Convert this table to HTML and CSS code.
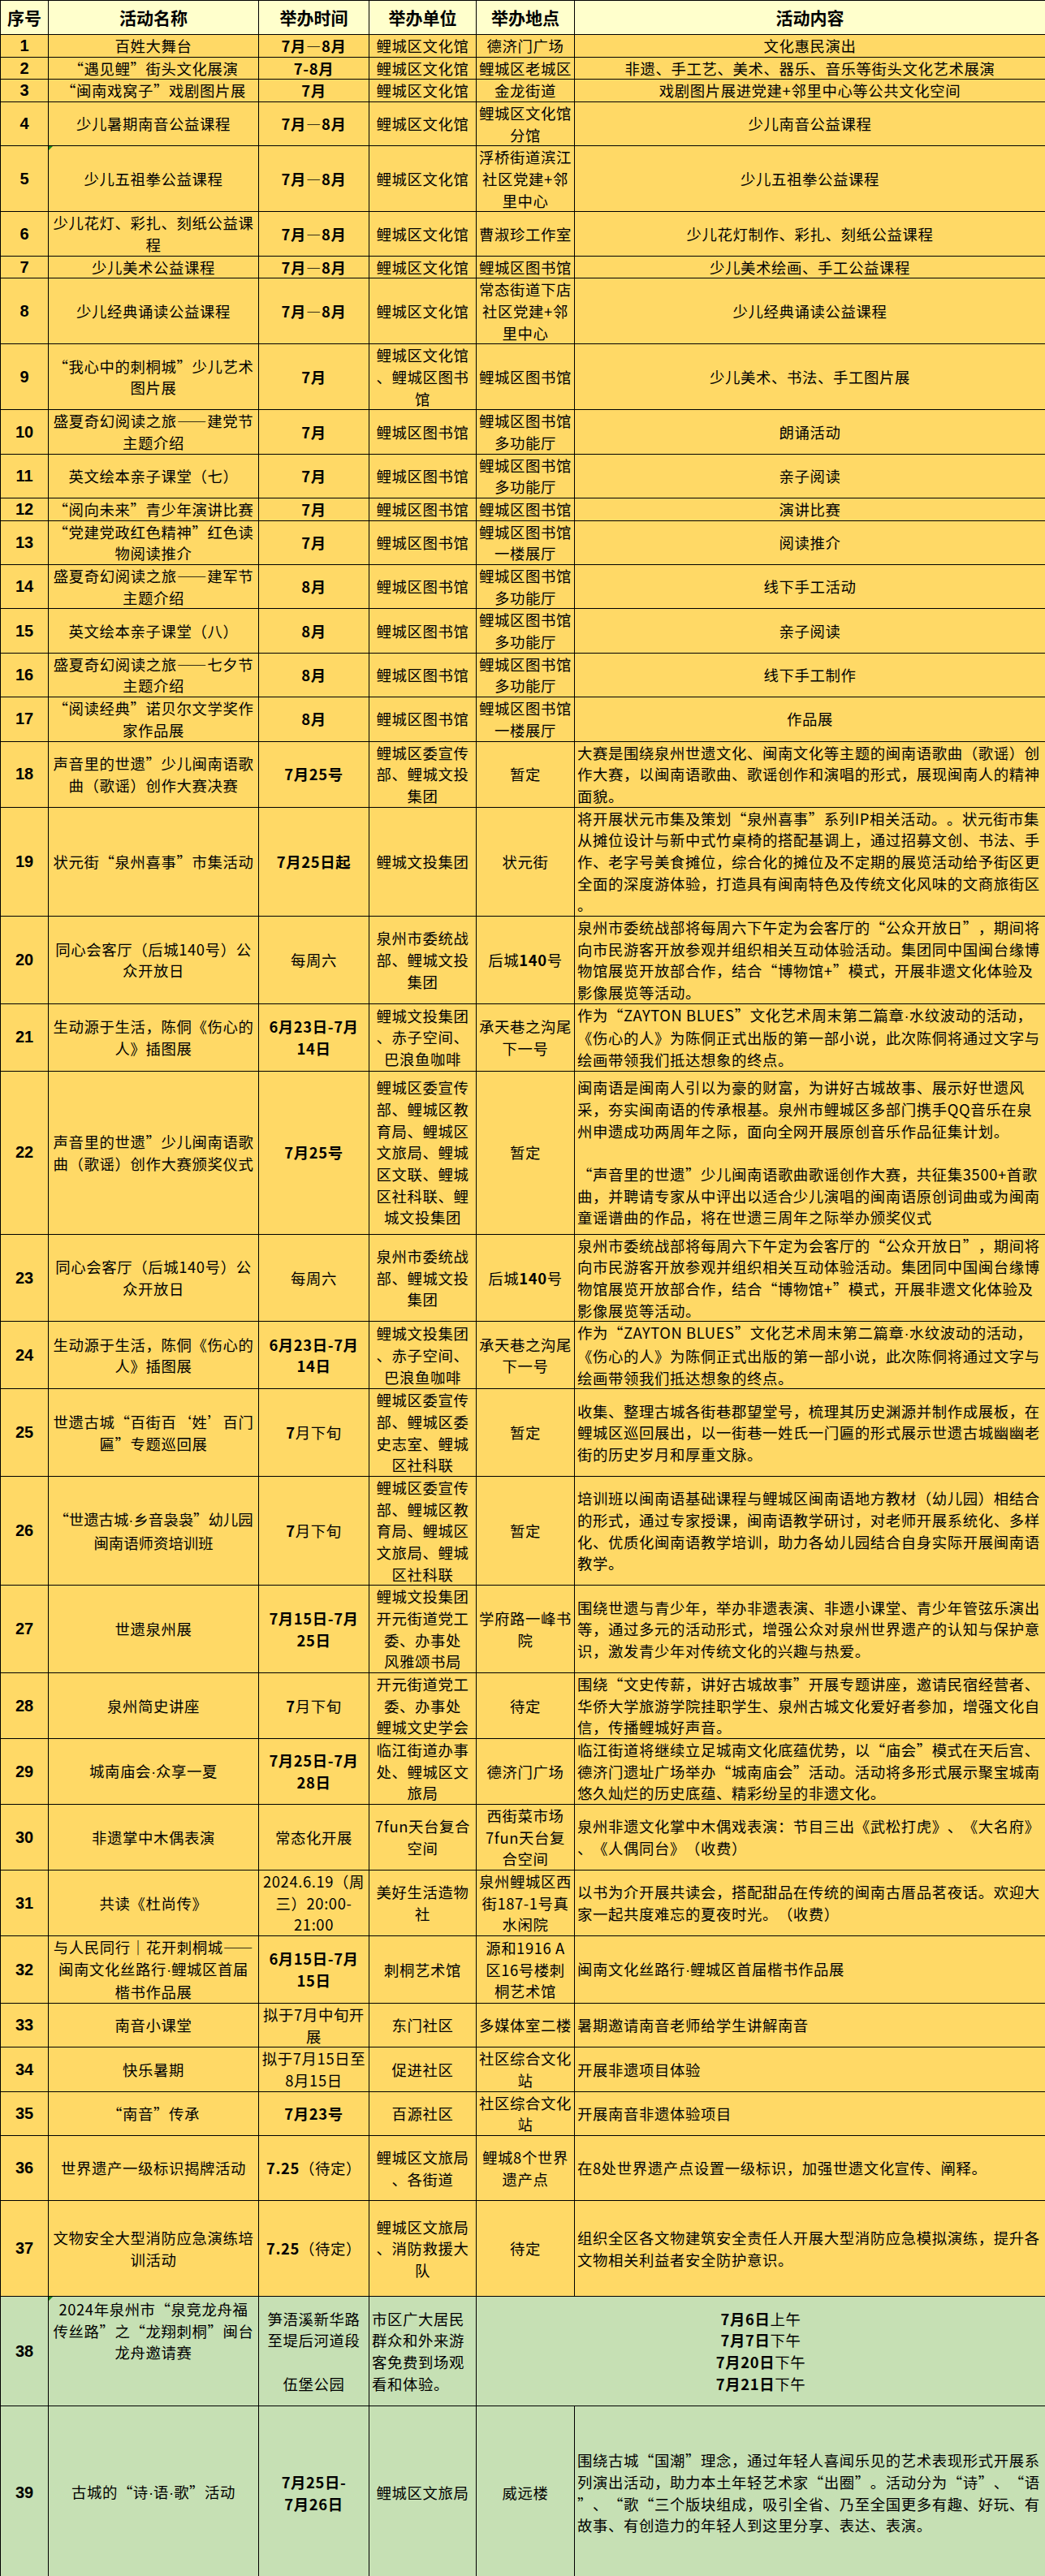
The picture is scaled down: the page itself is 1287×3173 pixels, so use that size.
FILE: index.html
```html
<!DOCTYPE html>
<html lang="zh-CN">
<head>
<meta charset="utf-8">
<title>鲤城区暑期文化活动一览表</title>
<link rel="stylesheet" href="styles.css">
</head>
<body>
<table class="sched">
<colgroup><col class="c-no"><col class="c-name"><col class="c-time"><col class="c-org"><col class="c-place"><col class="c-desc"></colgroup>
<thead>
<tr><th>序号</th><th>活动名称</th><th>举办时间</th><th>举办单位</th><th>举办地点</th><th>活动内容</th></tr>
</thead>
<tbody>
<tr><td class="no">1</td><td class="name">百姓大舞台</td><td class="time"><b>7月—8月</b></td><td>鲤城区文化馆</td><td>德济门广场</td><td>文化惠民演出</td></tr>
<tr><td class="no">2</td><td class="name">“遇见鲤”街头文化展演</td><td class="time"><b>7-8月</b></td><td>鲤城区文化馆</td><td>鲤城区老城区</td><td>非遗、手工艺、美术、器乐、音乐等街头文化艺术展演</td></tr>
<tr><td class="no">3</td><td class="name">“闽南戏窝子”戏剧图片展</td><td class="time"><b>7月</b></td><td>鲤城区文化馆</td><td>金龙街道</td><td>戏剧图片展进党建+邻里中心等公共文化空间</td></tr>
<tr><td class="no">4</td><td class="name">少儿暑期南音公益课程</td><td class="time"><b>7月—8月</b></td><td>鲤城区文化馆</td><td>鲤城区文化馆分馆</td><td>少儿南音公益课程</td></tr>
<tr><td class="no">5</td><td class="name note">少儿五祖拳公益课程</td><td class="time"><b>7月—8月</b></td><td>鲤城区文化馆</td><td>浮桥街道滨江社区党建+邻里中心</td><td>少儿五祖拳公益课程</td></tr>
<tr><td class="no">6</td><td class="name">少儿花灯、彩扎、刻纸公益课程</td><td class="time"><b>7月—8月</b></td><td>鲤城区文化馆</td><td>曹淑珍工作室</td><td>少儿花灯制作、彩扎、刻纸公益课程</td></tr>
<tr><td class="no">7</td><td class="name">少儿美术公益课程</td><td class="time"><b>7月—8月</b></td><td>鲤城区文化馆</td><td>鲤城区图书馆</td><td>少儿美术绘画、手工公益课程</td></tr>
<tr><td class="no">8</td><td class="name">少儿经典诵读公益课程</td><td class="time"><b>7月—8月</b></td><td>鲤城区文化馆</td><td>常态街道下店社区党建+邻里中心</td><td>少儿经典诵读公益课程</td></tr>
<tr><td class="no">9</td><td class="name">“我心中的刺桐城”少儿艺术图片展</td><td class="time"><b>7月</b></td><td>鲤城区文化馆、鲤城区图书馆</td><td>鲤城区图书馆</td><td>少儿美术、书法、手工图片展</td></tr>
<tr><td class="no">10</td><td class="name">盛夏奇幻阅读之旅——建党节主题介绍</td><td class="time"><b>7月</b></td><td>鲤城区图书馆</td><td>鲤城区图书馆多功能厅</td><td>朗诵活动</td></tr>
<tr><td class="no">11</td><td class="name">英文绘本亲子课堂（七）</td><td class="time"><b>7月</b></td><td>鲤城区图书馆</td><td>鲤城区图书馆多功能厅</td><td>亲子阅读</td></tr>
<tr><td class="no">12</td><td class="name">“阅向未来”青少年演讲比赛</td><td class="time"><b>7月</b></td><td>鲤城区图书馆</td><td>鲤城区图书馆</td><td>演讲比赛</td></tr>
<tr><td class="no">13</td><td class="name">“党建党政红色精神”红色读物阅读推介</td><td class="time"><b>7月</b></td><td>鲤城区图书馆</td><td>鲤城区图书馆一楼展厅</td><td>阅读推介</td></tr>
<tr><td class="no">14</td><td class="name">盛夏奇幻阅读之旅——建军节主题介绍</td><td class="time"><b>8月</b></td><td>鲤城区图书馆</td><td>鲤城区图书馆多功能厅</td><td>线下手工活动</td></tr>
<tr><td class="no">15</td><td class="name">英文绘本亲子课堂（八）</td><td class="time"><b>8月</b></td><td>鲤城区图书馆</td><td>鲤城区图书馆多功能厅</td><td>亲子阅读</td></tr>
<tr><td class="no">16</td><td class="name">盛夏奇幻阅读之旅——七夕节主题介绍</td><td class="time"><b>8月</b></td><td>鲤城区图书馆</td><td>鲤城区图书馆多功能厅</td><td>线下手工制作</td></tr>
<tr><td class="no">17</td><td class="name">“阅读经典”诺贝尔文学奖作家作品展</td><td class="time"><b>8月</b></td><td>鲤城区图书馆</td><td>鲤城区图书馆一楼展厅</td><td>作品展</td></tr>
<tr><td class="no">18</td><td class="name">声音里的世遗”少儿闽南语歌曲（歌谣）创作大赛决赛</td><td class="time"><b>7月25号</b></td><td>鲤城区委宣传部、鲤城文投集团</td><td>暂定</td><td class="l">大赛是围绕泉州世遗文化、闽南文化等主题的闽南语歌曲（歌谣）创作大赛，以闽南语歌曲、歌谣创作和演唱的形式，展现闽南人的精神面貌。</td></tr>
<tr><td class="no">19</td><td class="name">状元街“泉州喜事”市集活动</td><td class="time"><b>7月25日起</b></td><td>鲤城文投集团</td><td>状元街</td><td class="l">将开展状元市集及策划“泉州喜事”系列IP相关活动。。状元街市集从摊位设计与新中式竹桌椅的搭配基调上，通过招募文创、书法、手作、老字号美食摊位，综合化的摊位及不定期的展览活动给予街区更全面的深度游体验，打造具有闽南特色及传统文化风味的文商旅街区。</td></tr>
<tr><td class="no">20</td><td class="name">同心会客厅（后城140号）公众开放日</td><td class="time">每周六</td><td>泉州市委统战部、鲤城文投集团</td><td>后城<b>140</b>号</td><td class="l">泉州市委统战部将每周六下午定为会客厅的“公众开放日”，期间将向市民游客开放参观并组织相关互动体验活动。集团同中国闽台缘博物馆展览开放部合作，结合“博物馆+”模式，开展非遗文化体验及影像展览等活动。</td></tr>
<tr><td class="no">21</td><td class="name">生动源于生活，陈侗《伤心的人》插图展</td><td class="time"><b>6月23日-7月14日</b></td><td>鲤城文投集团、赤子空间、巴浪鱼咖啡</td><td>承天巷之沟尾下一号</td><td class="l">作为“ZAYTON BLUES”文化艺术周末第二篇章<span class="mid">·</span>水纹波动的活动，<br>《伤心的人》为陈侗正式出版的第一部小说，此次陈侗将通过文字与<br>绘画带领我们抵达想象的终点。</td></tr>
<tr class="h201"><td class="no">22</td><td class="name">声音里的世遗”少儿闽南语歌曲（歌谣）创作大赛颁奖仪式</td><td class="time"><b>7月25号</b></td><td>鲤城区委宣传部、鲤城区教育局、鲤城区文旅局、鲤城区文联、鲤城区社科联、鲤城文投集团</td><td>暂定</td><td class="l">闽南语是闽南人引以为豪的财富，为讲好古城故事、展示好世遗风<br>采，夯实闽南语的传承根基。泉州市鲤城区多部门携手QQ音乐在泉州申遗成功两周年之际，面向全网开展原创音乐作品征集计划。<br><br>“声音里的世遗”少儿闽南语歌曲歌谣创作大赛，共征集3500+首歌曲，并聘请专家从中评出以适合少儿演唱的闽南语原创词曲或为闽南童谣谱曲的作品，将在世遗三周年之际举办颁奖仪式</td></tr>
<tr><td class="no">23</td><td class="name">同心会客厅（后城140号）公众开放日</td><td class="time">每周六</td><td>泉州市委统战部、鲤城文投集团</td><td>后城<b>140</b>号</td><td class="l">泉州市委统战部将每周六下午定为会客厅的“公众开放日”，期间将向市民游客开放参观并组织相关互动体验活动。集团同中国闽台缘博物馆展览开放部合作，结合“博物馆+”模式，开展非遗文化体验及影像展览等活动。</td></tr>
<tr><td class="no">24</td><td class="name">生动源于生活，陈侗《伤心的人》插图展</td><td class="time"><b>6月23日-7月14日</b></td><td>鲤城文投集团、赤子空间、巴浪鱼咖啡</td><td>承天巷之沟尾下一号</td><td class="l">作为“ZAYTON BLUES”文化艺术周末第二篇章<span class="mid">·</span>水纹波动的活动，<br>《伤心的人》为陈侗正式出版的第一部小说，此次陈侗将通过文字与<br>绘画带领我们抵达想象的终点。</td></tr>
<tr><td class="no">25</td><td class="name">世遗古城“百街百‘姓’百门匾”专题巡回展</td><td class="time"><b>7</b>月下旬</td><td>鲤城区委宣传部、鲤城区委史志室、鲤城区社科联</td><td>暂定</td><td class="l">收集、整理古城各街巷郡望堂号，梳理其历史渊源并制作成展板，在鲤城区巡回展出，以一街巷一姓氏一门匾的形式展示世遗古城幽幽老街的历史岁月和厚重文脉。</td></tr>
<tr><td class="no">26</td><td class="name tight">“世遗古城<span class="mid">·</span>乡音袅袅”幼儿园<br>闽南语师资培训班</td><td class="time"><b>7</b>月下旬</td><td>鲤城区委宣传部、鲤城区教育局、鲤城区文旅局、鲤城区社科联</td><td>暂定</td><td class="l">培训班以闽南语基础课程与鲤城区闽南语地方教材（幼儿园）相结合的形式，通过专家授课，闽南语教学研讨，对老师开展系统化、多样化、优质化闽南语教学培训，助力各幼儿园结合自身实际开展闽南语教学。</td></tr>
<tr><td class="no">27</td><td class="name">世遗泉州展</td><td class="time"><b>7月15日-7月25日</b></td><td>鲤城文投集团<br>开元街道党工委、办事处<br>风雅颂书局</td><td>学府路一峰书院</td><td class="l">围绕世遗与青少年，举办非遗表演、非遗小课堂、青少年管弦乐演出等，通过多元的活动形式，增强公众对泉州世界遗产的认知与保护意识，激发青少年对传统文化的兴趣与热爱。</td></tr>
<tr><td class="no">28</td><td class="name">泉州简史讲座</td><td class="time"><b>7</b>月下旬</td><td>开元街道党工委、办事处<br>鲤城文史学会</td><td>待定</td><td class="l">围绕“文史传薪，讲好古城故事”开展专题讲座，邀请民宿经营者、华侨大学旅游学院挂职学生、泉州古城文化爱好者参加，增强文化自信，传播鲤城好声音。</td></tr>
<tr><td class="no">29</td><td class="name">城南庙会<span class="mid">·</span>众享一夏</td><td class="time"><b>7月25日-7月28日</b></td><td>临江街道办事处、鲤城区文旅局</td><td>德济门广场</td><td class="l">临江街道将继续立足城南文化底蕴优势，以“庙会”模式在天后宫、德济门遗址广场举办“城南庙会”活动。活动将多形式展示聚宝城南悠久灿烂的历史底蕴、精彩纷呈的非遗文化。</td></tr>
<tr><td class="no">30</td><td class="name">非遗掌中木偶表演</td><td class="time">常态化开展</td><td class="nb">7fun天台复合空间</td><td class="nb">西街菜市场7fun天台复合空间</td><td class="l">泉州非遗文化掌中木偶戏表演：节目三出《武松打虎》、《大名府》、《人偶同台》（收费）</td></tr>
<tr><td class="no">31</td><td class="name">共读《杜尚传》</td><td class="time">2024.6.19（周三）20:00-&#8203;21:00</td><td>美好生活造物社</td><td class="nb">泉州鲤城区西街187-1号真水闲院</td><td class="l">以书为介开展共读会，搭配甜品在传统的闽南古厝品茗夜话。欢迎大家一起共度难忘的夏夜时光。（收费）</td></tr>
<tr><td class="no">32</td><td class="name">与人民同行｜花开刺桐城——<br>闽南文化丝路行<span class="mid">·</span>鲤城区首届<br>楷书作品展</td><td class="time"><b>6月15日-7月15日</b></td><td>刺桐艺术馆</td><td class="nb">源和1916 A区16号楼刺桐艺术馆</td><td class="l">闽南文化丝路行<span class="mid">·</span>鲤城区首届楷书作品展</td></tr>
<tr><td class="no">33</td><td class="name">南音小课堂</td><td class="time">拟于7月中旬开展</td><td>东门社区</td><td>多媒体室二楼</td><td class="l">暑期邀请南音老师给学生讲解南音</td></tr>
<tr><td class="no">34</td><td class="name">快乐暑期</td><td class="time">拟于7月15日至8月15日</td><td>促进社区</td><td>社区综合文化站</td><td class="l">开展非遗项目体验</td></tr>
<tr><td class="no">35</td><td class="name">“南音”传承</td><td class="time"><b>7月23号</b></td><td>百源社区</td><td>社区综合文化站</td><td class="l">开展南音非遗体验项目</td></tr>
<tr class="h80"><td class="no">36</td><td class="name">世界遗产一级标识揭牌活动</td><td class="time"><b>7.25</b>（待定）</td><td>鲤城区文旅局、各街道</td><td>鲤城8个世界遗产点</td><td class="l">在8处世界遗产点设置一级标识，加强世遗文化宣传、阐释。</td></tr>
<tr class="h118"><td class="no">37</td><td class="name">文物安全大型消防应急演练培训活动</td><td class="time"><b>7.25</b>（待定）</td><td>鲤城区文旅局、消防救援大队</td><td>待定</td><td class="l">组织全区各文物建筑安全责任人开展大型消防应急模拟演练，提升各文物相关利益者安全防护意识。</td></tr>
<tr class="green h135"><td class="no">38</td><td class="name note top">2024年泉州市“泉竞龙舟福<br>传丝路”之“龙翔刺桐”闽台<br>龙舟邀请赛</td><td>笋浯溪新华路至堤后河道段<br><br>伍堡公园</td><td class="l">市区广大居民群众和外来游客免费到场观看和体验。</td><td colspan="2"><b>7月6日</b>上午<br><b>7月7日</b>下午<br><b>7月20日</b>下午<br><b>7月21日</b>下午</td></tr>
<tr class="green h214"><td class="no">39</td><td class="name">古城的“诗<span class="mid">·</span>语<span class="mid">·</span>歌”活动</td><td class="time"><b>7月25日-</b><br><b>7月26日</b></td><td>鲤城区文旅局</td><td>威远楼</td><td class="l">围绕古城“国潮”理念，通过年轻人喜闻乐见的艺术表现形式开展系列演出活动，助力本土年轻艺术家“出圈”。活动分为“诗”、“语”、“歌“三个版块组成，吸引全省、乃至全国更多有趣、好玩、有故事、有创造力的年轻人到这里分享、表达、表演。</td></tr>
</tbody>
</table>
</body>
</html>
```

FILE: styles.css
```css
html, body {
  margin: 0;
  padding: 0;
  background: #ffffff;
}

body {
  font-family: "Noto Sans CJK SC", "Noto Sans CJK JP", sans-serif;
  color: #000000;
}

.sched {
  border-collapse: collapse;
  table-layout: fixed;
  width: 1287px;
  font-size: 18.4px;
  line-height: 26.667px;
  text-spacing-trim: space-all;
  text-autospace: no-autospace;
}

.c-no { width: 59px; }
.c-name { width: 259px; }
.c-time { width: 136px; }
.c-org { width: 132px; }
.c-place { width: 121px; }
.c-desc { width: 580px; }

.sched th,
.sched td {
  border: 1px solid #000000;
  padding: 0 2px;
  text-align: center;
  vertical-align: middle;
  line-break: anywhere;
  word-break: break-all;
}

.sched td {
  background: #ffd966;
  letter-spacing: 0.6px;
}

.sched th {
  background: #ffffcc;
  font-size: 21px;
  font-weight: 700;
  height: 41px;
  padding: 0;
}

.sched td.no {
  font-family: "Liberation Sans", "Noto Sans CJK SC", sans-serif;
  font-weight: 700;
  font-size: 20px;
  letter-spacing: 0;
}

.sched td.name {
  padding: 0 3.5px;
}

.sched td.tight {
  letter-spacing: 0;
}

.sched td.time,
.sched td.nb {
  line-break: auto;
  word-break: normal;
}

.sched td.l {
  text-align: left;
  padding-left: 3px;
}

.sched td.top {
  vertical-align: top;
  padding-top: 2px;
}

.sched b {
  font-weight: 700;
}

.sched .mid {
  font-family: "Liberation Sans", sans-serif;
  letter-spacing: 0;
}

.sched tr.green td {
  background: #c6e0b4;
}

.sched tr.h80 { height: 80px; }
.sched tr.h118 { height: 118px; }
.sched tr.h135 { height: 135px; }
.sched tr.h201 { height: 201px; }
.sched tr.h214 { height: 214px; }

.sched td.note {
  position: relative;
}

.sched td.note::before {
  content: "";
  position: absolute;
  left: 0;
  top: 0;
  border-style: solid;
  border-width: 5px 5px 0 0;
  border-color: #1e8c1e transparent transparent transparent;
}
```
